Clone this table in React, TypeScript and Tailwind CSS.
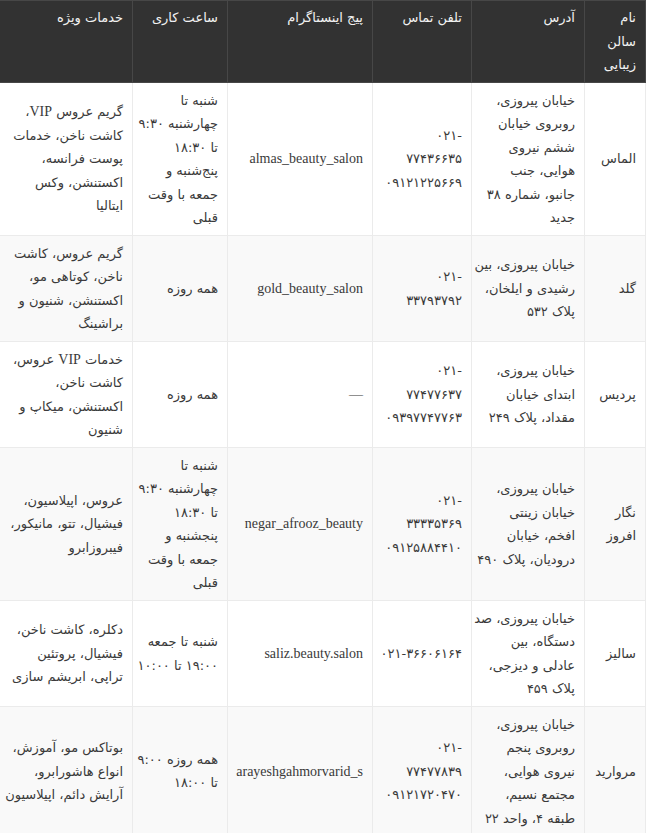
import React from "react";

type Row = {
  name: string[];
  address: string[];
  phone: string[];
  insta: string;
  hours: string[];
  services: string[];
};

const rows: Row[] = [
  {
    name: ["الماس"],
    address: ["خیابان پیروزی،", "روبروی خیابان", "ششم نیروی", "هوایی، جنب", "جانبو، شماره ۳۸", "جدید"],
    phone: ["۰۲۱-", "۷۷۴۳۶۶۳۵", "۰۹۱۲۱۲۲۵۶۶۹"],
    insta: "almas_beauty_salon",
    hours: ["شنبه تا", "چهارشنبه ۹:۳۰", "تا ۱۸:۳۰", "پنج‌شنبه و", "جمعه با وقت", "قبلی"],
    services: ["گریم عروس VIP،", "کاشت ناخن، خدمات", "پوست فرانسه،", "اکستنشن، وکس", "ایتالیا"],
  },
  {
    name: ["گلد"],
    address: ["خیابان پیروزی، بین", "رشیدی و ایلخان،", "پلاک ۵۳۲"],
    phone: ["۰۲۱-", "۳۳۷۹۳۷۹۲"],
    insta: "gold_beauty_salon",
    hours: ["همه روزه"],
    services: ["گریم عروس، کاشت", "ناخن، کوتاهی مو،", "اکستنشن، شنیون و", "براشینگ"],
  },
  {
    name: ["پردیس"],
    address: ["خیابان پیروزی،", "ابتدای خیابان", "مقداد، پلاک ۲۴۹"],
    phone: ["۰۲۱-", "۷۷۴۷۷۶۳۷", "۰۹۳۹۷۷۴۷۷۶۳"],
    insta: "—",
    hours: ["همه روزه"],
    services: ["خدمات VIP عروس،", "کاشت ناخن،", "اکستنشن، میکاپ و", "شنیون"],
  },
  {
    name: ["نگار", "افروز"],
    address: ["خیابان پیروزی،", "خیابان زینتی", "افخم، خیابان", "درودیان، پلاک ۴۹۰"],
    phone: ["۰۲۱-", "۳۳۳۳۵۳۶۹", "۰۹۱۲۵۸۸۴۴۱۰"],
    insta: "negar_afrooz_beauty",
    hours: ["شنبه تا", "چهارشنبه ۹:۳۰", "تا ۱۸:۳۰", "پنجشنبه و", "جمعه با وقت", "قبلی"],
    services: ["عروس، اپیلاسیون،", "فیشیال، تتو، مانیکور،", "فیبروزابرو"],
  },
  {
    name: ["سالیز"],
    address: ["خیابان پیروزی، صد", "دستگاه، بین", "عادلی و دیزجی،", "پلاک ۴۵۹"],
    phone: ["۰۲۱-۳۶۶۰۶۱۶۴"],
    insta: "saliz.beauty.salon",
    hours: ["شنبه تا جمعه", "۱۹:۰۰ تا ۱۰:۰۰"],
    services: ["دکلره، کاشت ناخن،", "فیشیال، پروتئین", "تراپی، ابریشم سازی"],
  },
  {
    name: ["مروارید"],
    address: ["خیابان پیروزی،", "روبروی پنجم", "نیروی هوایی،", "مجتمع نسیم،", "طبقه ۴، واحد ۲۲"],
    phone: ["۰۲۱-", "۷۷۴۷۷۸۳۹", "۰۹۱۲۱۷۲۰۴۷۰"],
    insta: "arayeshgahmorvarid_s",
    hours: ["همه روزه ۹:۰۰", "تا ۱۸:۰۰"],
    services: ["بوتاکس مو، آموزش،", "انواع هاشورابرو،", "آرایش دائم، اپیلاسیون"],
  },
];

function Line({ text }: { text: string }) {
  if (text.endsWith("-")) return <span dir="ltr">{text}</span>;
  const parts = text.split(/(VIP)/);
  return (
    <>
      {parts.map((p, i) =>
        p === "VIP" ? (
          <span key={i} className="font-['Liberation_Serif',serif] text-[14px]">
            VIP
          </span>
        ) : (
          <React.Fragment key={i}>{p}</React.Fragment>
        )
      )}
    </>
  );
}

function Lines({ lines }: { lines: string[] }) {
  return (
    <>
      {lines.map((l, i) => (
        <div key={i} className="whitespace-nowrap">
          <Line text={l} />
        </div>
      ))}
    </>
  );
}

const th = "border border-[#474747] px-[9px] pt-[5px] pb-[5px] text-right align-top font-normal text-[#f2f2f2]";
const td = "border border-[#ebebeb] px-[9px] pt-[6px] pb-[5px] text-right align-middle";

export default function App() {
  return (
    <div
      dir="rtl"
      className="w-[646px] bg-white text-[#3a3a3a] text-[13px] leading-[23.5px] font-['DejaVu_Sans',sans-serif]"
    >
      <table className="w-full table-fixed border-collapse">
        <colgroup>
          <col className="w-[61px]" />
          <col className="w-[113px]" />
          <col className="w-[99px]" />
          <col className="w-[145px]" />
          <col className="w-[95px]" />
          <col className="w-[133px]" />
        </colgroup>
        <thead>
          <tr className="bg-[#323232]">
            <th className={th}>
              <Lines lines={["نام", "سالن", "زیبایی"]} />
            </th>
            <th className={th}>آدرس</th>
            <th className={th}>تلفن تماس</th>
            <th className={th}>پیج اینستاگرام</th>
            <th className={th}>ساعت کاری</th>
            <th className={th}>خدمات ویژه</th>
          </tr>
        </thead>
        <tbody>
          {rows.map((r, i) => (
            <tr key={i} className={i % 2 === 1 ? "bg-[#f9f9f9]" : "bg-white"}>
              <td className={td}>
                <Lines lines={r.name} />
              </td>
              <td className={td}>
                <Lines lines={r.address} />
              </td>
              <td className={td}>
                <Lines lines={r.phone} />
              </td>
              <td
                className={`${td} text-[14px] whitespace-nowrap overflow-hidden font-['Liberation_Serif',serif]`}
              >
                {r.insta}
              </td>
              <td className={td}>
                <Lines lines={r.hours} />
              </td>
              <td className={td}>
                <Lines lines={r.services} />
              </td>
            </tr>
          ))}
        </tbody>
      </table>
    </div>
  );
}
